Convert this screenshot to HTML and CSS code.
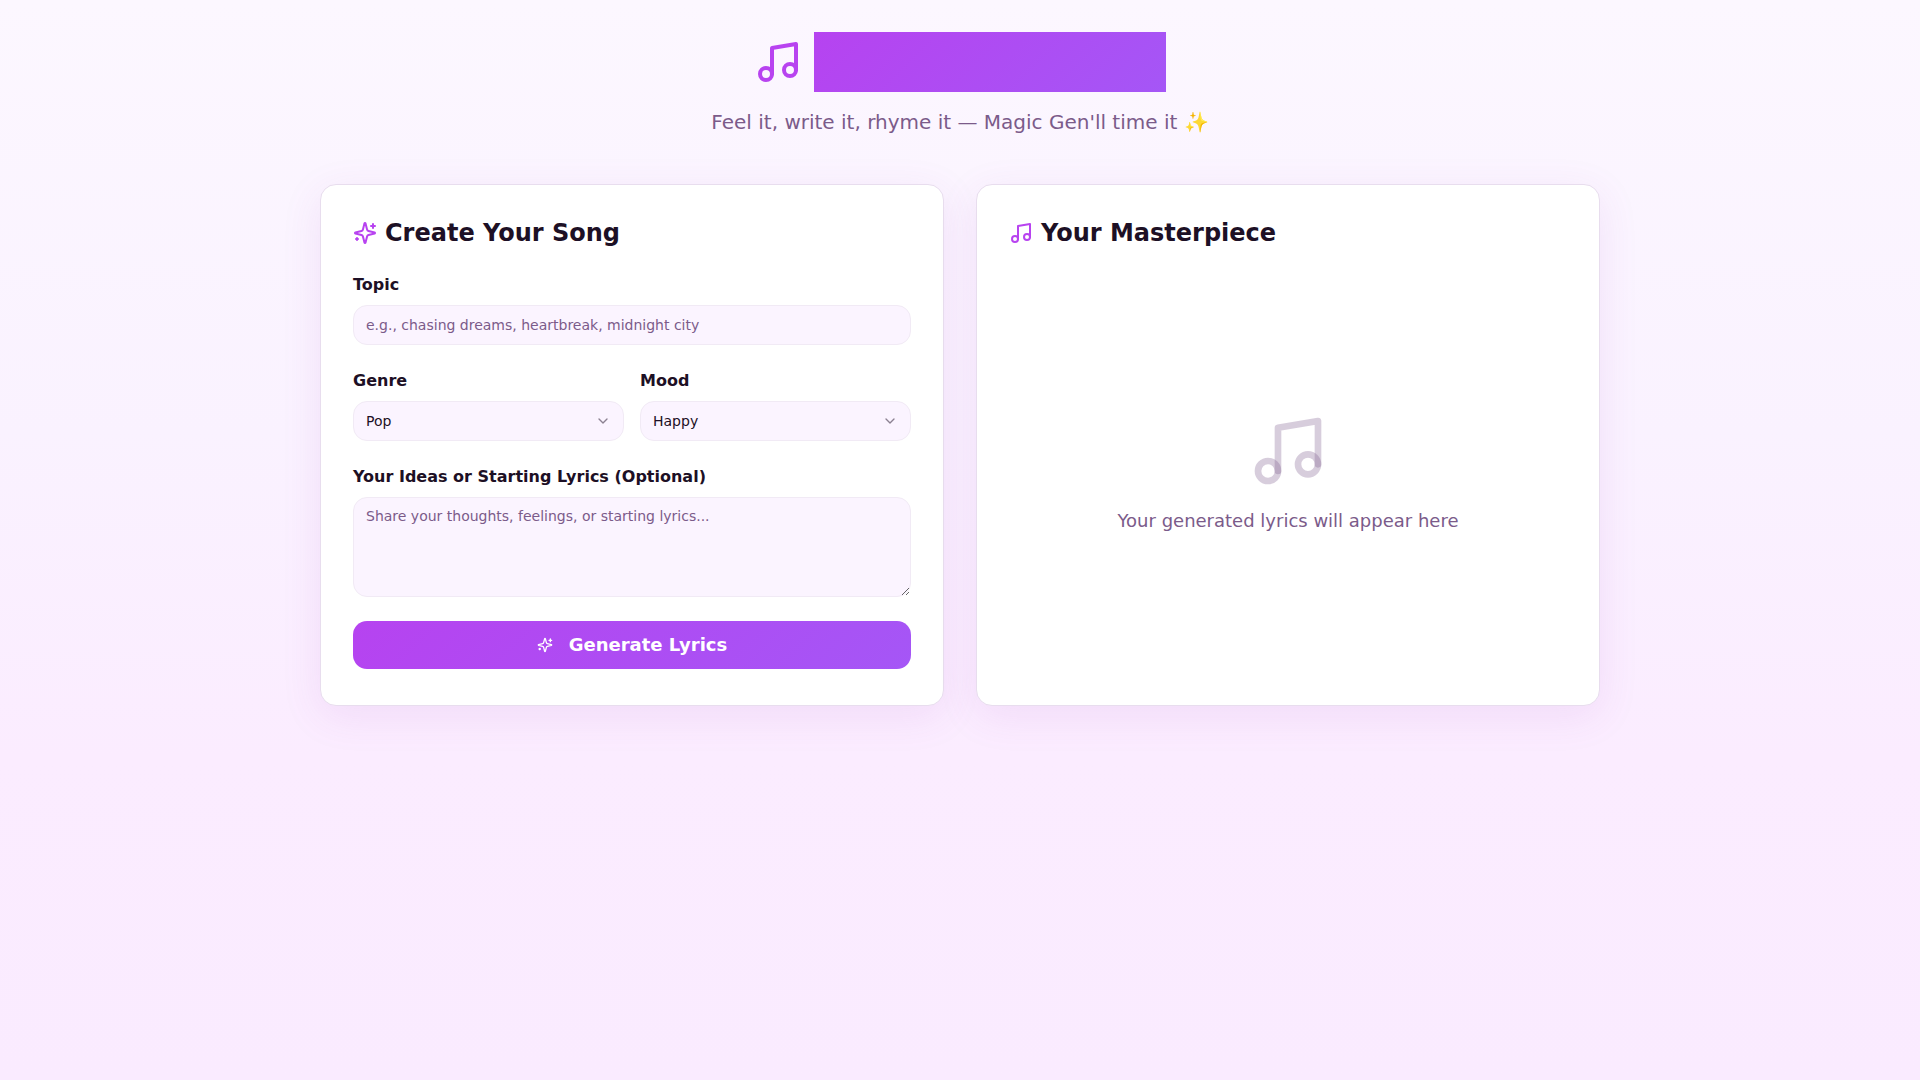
FILE: index.html
```html
<!DOCTYPE html>
<html lang="en">
<head>
  <meta charset="utf-8">
  <meta name="viewport" content="width=device-width, initial-scale=1">
  <title>Magic Gen</title>
  <link rel="stylesheet" href="styles.css">
</head>
<body>
  <svg class="sprite" aria-hidden="true">
    <symbol id="music" viewBox="0 0 24 24">
      <path d="M9 18V5l12-2v13"/>
      <circle cx="6" cy="18" r="3"/>
      <circle cx="18" cy="16" r="3"/>
    </symbol>
    <symbol id="sparkles" viewBox="0 0 24 24">
      <path d="M9.937 15.5A2 2 0 0 0 8.5 14.063l-6.135-1.582a.5.5 0 0 1 0-.962L8.5 9.936A2 2 0 0 0 9.937 8.5l1.582-6.135a.5.5 0 0 1 .963 0L14.063 8.5A2 2 0 0 0 15.5 9.937l6.135 1.581a.5.5 0 0 1 0 .964L15.5 14.063a2 2 0 0 0-1.437 1.437l-1.582 6.135a.5.5 0 0 1-.963 0z"/>
      <path d="M20 3v4"/>
      <path d="M22 5h-4"/>
      <path d="M4 17v2"/>
      <path d="M5 18H3"/>
    </symbol>
    <symbol id="chevron" viewBox="0 0 24 24">
      <path d="m6 9 6 6 6-6"/>
    </symbol>
  </svg>

  <div class="page">
    <header class="header">
      <div class="brand">
        <svg class="icon icon-brand" aria-hidden="true"><use href="#music"/></svg>
        <h1 class="brand-name">Magic Gen</h1>
      </div>
      <p class="tagline">Feel it, write it, rhyme it — Magic Gen'll time it ✨</p>
    </header>

    <main class="columns">
      <section class="card">
        <h2 class="card-title">
          <svg class="icon icon-title" aria-hidden="true"><use href="#sparkles"/></svg>
          Create Your Song
        </h2>
        <form class="form">
          <div class="field">
            <label for="topic">Topic</label>
            <input class="control" id="topic" type="text" placeholder="e.g., chasing dreams, heartbreak, midnight city">
          </div>
          <div class="field-row">
            <div class="field">
              <label for="genre">Genre</label>
              <div class="select">
                <select class="control" id="genre">
                  <option>Pop</option>
                  <option>Rock</option>
                </select>
                <svg class="icon icon-chevron" aria-hidden="true"><use href="#chevron"/></svg>
              </div>
            </div>
            <div class="field">
              <label for="mood">Mood</label>
              <div class="select">
                <select class="control" id="mood">
                  <option>Happy</option>
                  <option>Sad</option>
                </select>
                <svg class="icon icon-chevron" aria-hidden="true"><use href="#chevron"/></svg>
              </div>
            </div>
          </div>
          <div class="field">
            <label for="ideas">Your Ideas or Starting Lyrics (Optional)</label>
            <textarea class="control control-area" id="ideas" placeholder="Share your thoughts, feelings, or starting lyrics..."></textarea>
          </div>
          <button class="button" type="button">
            <svg class="icon icon-button" aria-hidden="true"><use href="#sparkles"/></svg>
            Generate Lyrics
          </button>
        </form>
      </section>

      <section class="card">
        <h2 class="card-title">
          <svg class="icon icon-title" aria-hidden="true"><use href="#music"/></svg>
          Your Masterpiece
        </h2>
        <div class="empty">
          <svg class="icon icon-empty" aria-hidden="true"><use href="#music"/></svg>
          <p class="empty-text">Your generated lyrics will appear here</p>
        </div>
      </section>
    </main>
  </div>
</body>
</html>
```
FILE: styles.css
```css
:root {
  --text: #1d1025;
  --muted: #7b5b8a;
  --primary: #b843f0;
  --gradient: linear-gradient(135deg, #b643f0, #a556f6);
  --field: #fbf4ff;
  --field-border: #f1eaf5;
  --card-border: #e8ddee;
}

*,
*::before,
*::after {
  box-sizing: border-box;
}

body {
  margin: 0;
  min-height: 100vh;
  background: linear-gradient(180deg, #fcf7ff, #faf2ff 40%, #fbecff 70%, #faebff);
  color: var(--text);
  font: 16px/24px "DejaVu Sans", sans-serif;
}

h1,
h2,
p {
  margin: 0;
}

.sprite {
  position: absolute;
  width: 0;
  height: 0;
}

.icon {
  flex: none;
  fill: none;
  stroke: currentColor;
  stroke-width: 2;
  stroke-linecap: round;
  stroke-linejoin: round;
}

.page {
  max-width: 1312px;
  margin: 0 auto;
  padding: 32px 16px;
}

.header {
  display: flex;
  flex-direction: column;
  align-items: center;
  gap: 16px;
  margin-bottom: 48px;
  text-align: center;
}

.brand {
  display: flex;
  align-items: center;
  gap: 12px;
}

.icon-brand {
  width: 48px;
  height: 48px;
  color: var(--primary);
}

.brand-name {
  background: var(--gradient);
  color: transparent;
  font-size: 60px;
  line-height: 60px;
}

.tagline {
  color: var(--muted);
  font-size: 20px;
  line-height: 28px;
}

.columns {
  display: grid;
  grid-template-columns: repeat(auto-fit, minmax(min(100%, 400px), 1fr));
  gap: 32px;
}

.card {
  padding: 32px;
  border: 1px solid var(--card-border);
  border-radius: 16px;
  background: #fff;
  box-shadow: 0 10px 40px rgba(160, 60, 190, 0.1);
}

.card-title {
  display: flex;
  align-items: center;
  gap: 8px;
  margin-bottom: 24px;
  font-size: 24px;
  line-height: 32px;
}

.icon-title {
  width: 24px;
  height: 24px;
  color: var(--primary);
}

.form {
  display: grid;
  gap: 24px;
}

.field {
  display: grid;
  gap: 8px;
  font-weight: 700;
}

.field-row {
  display: grid;
  grid-template-columns: 1fr 1fr;
  gap: 16px;
}

.control {
  display: block;
  width: 100%;
  height: 40px;
  padding: 8px 12px;
  border: 1px solid var(--field-border);
  border-radius: 14px;
  background: var(--field);
  color: var(--text);
  font: 14px/20px "DejaVu Sans", sans-serif;
  appearance: none;
}

.control::placeholder {
  color: var(--muted);
}

.control-area {
  height: 100px;
  resize: vertical;
}

.select {
  position: relative;
}

.icon-chevron {
  position: absolute;
  top: 12px;
  right: 13px;
  width: 16px;
  height: 16px;
  opacity: 0.5;
  pointer-events: none;
}

.button {
  display: flex;
  align-items: center;
  justify-content: center;
  gap: 16px;
  height: 48px;
  border: 0;
  border-radius: 14px;
  background: var(--gradient);
  color: #fff;
  font: 700 18px/28px "DejaVu Sans", sans-serif;
}

.icon-button {
  width: 16px;
  height: 16px;
}

.empty {
  display: flex;
  flex-direction: column;
  align-items: center;
  justify-content: center;
  gap: 16px;
  min-height: 400px;
  color: var(--muted);
  text-align: center;
}

.icon-empty {
  width: 80px;
  height: 80px;
  stroke: rgba(123, 91, 138, 0.3);
}

.empty-text {
  font-size: 18px;
  line-height: 28px;
}
```
